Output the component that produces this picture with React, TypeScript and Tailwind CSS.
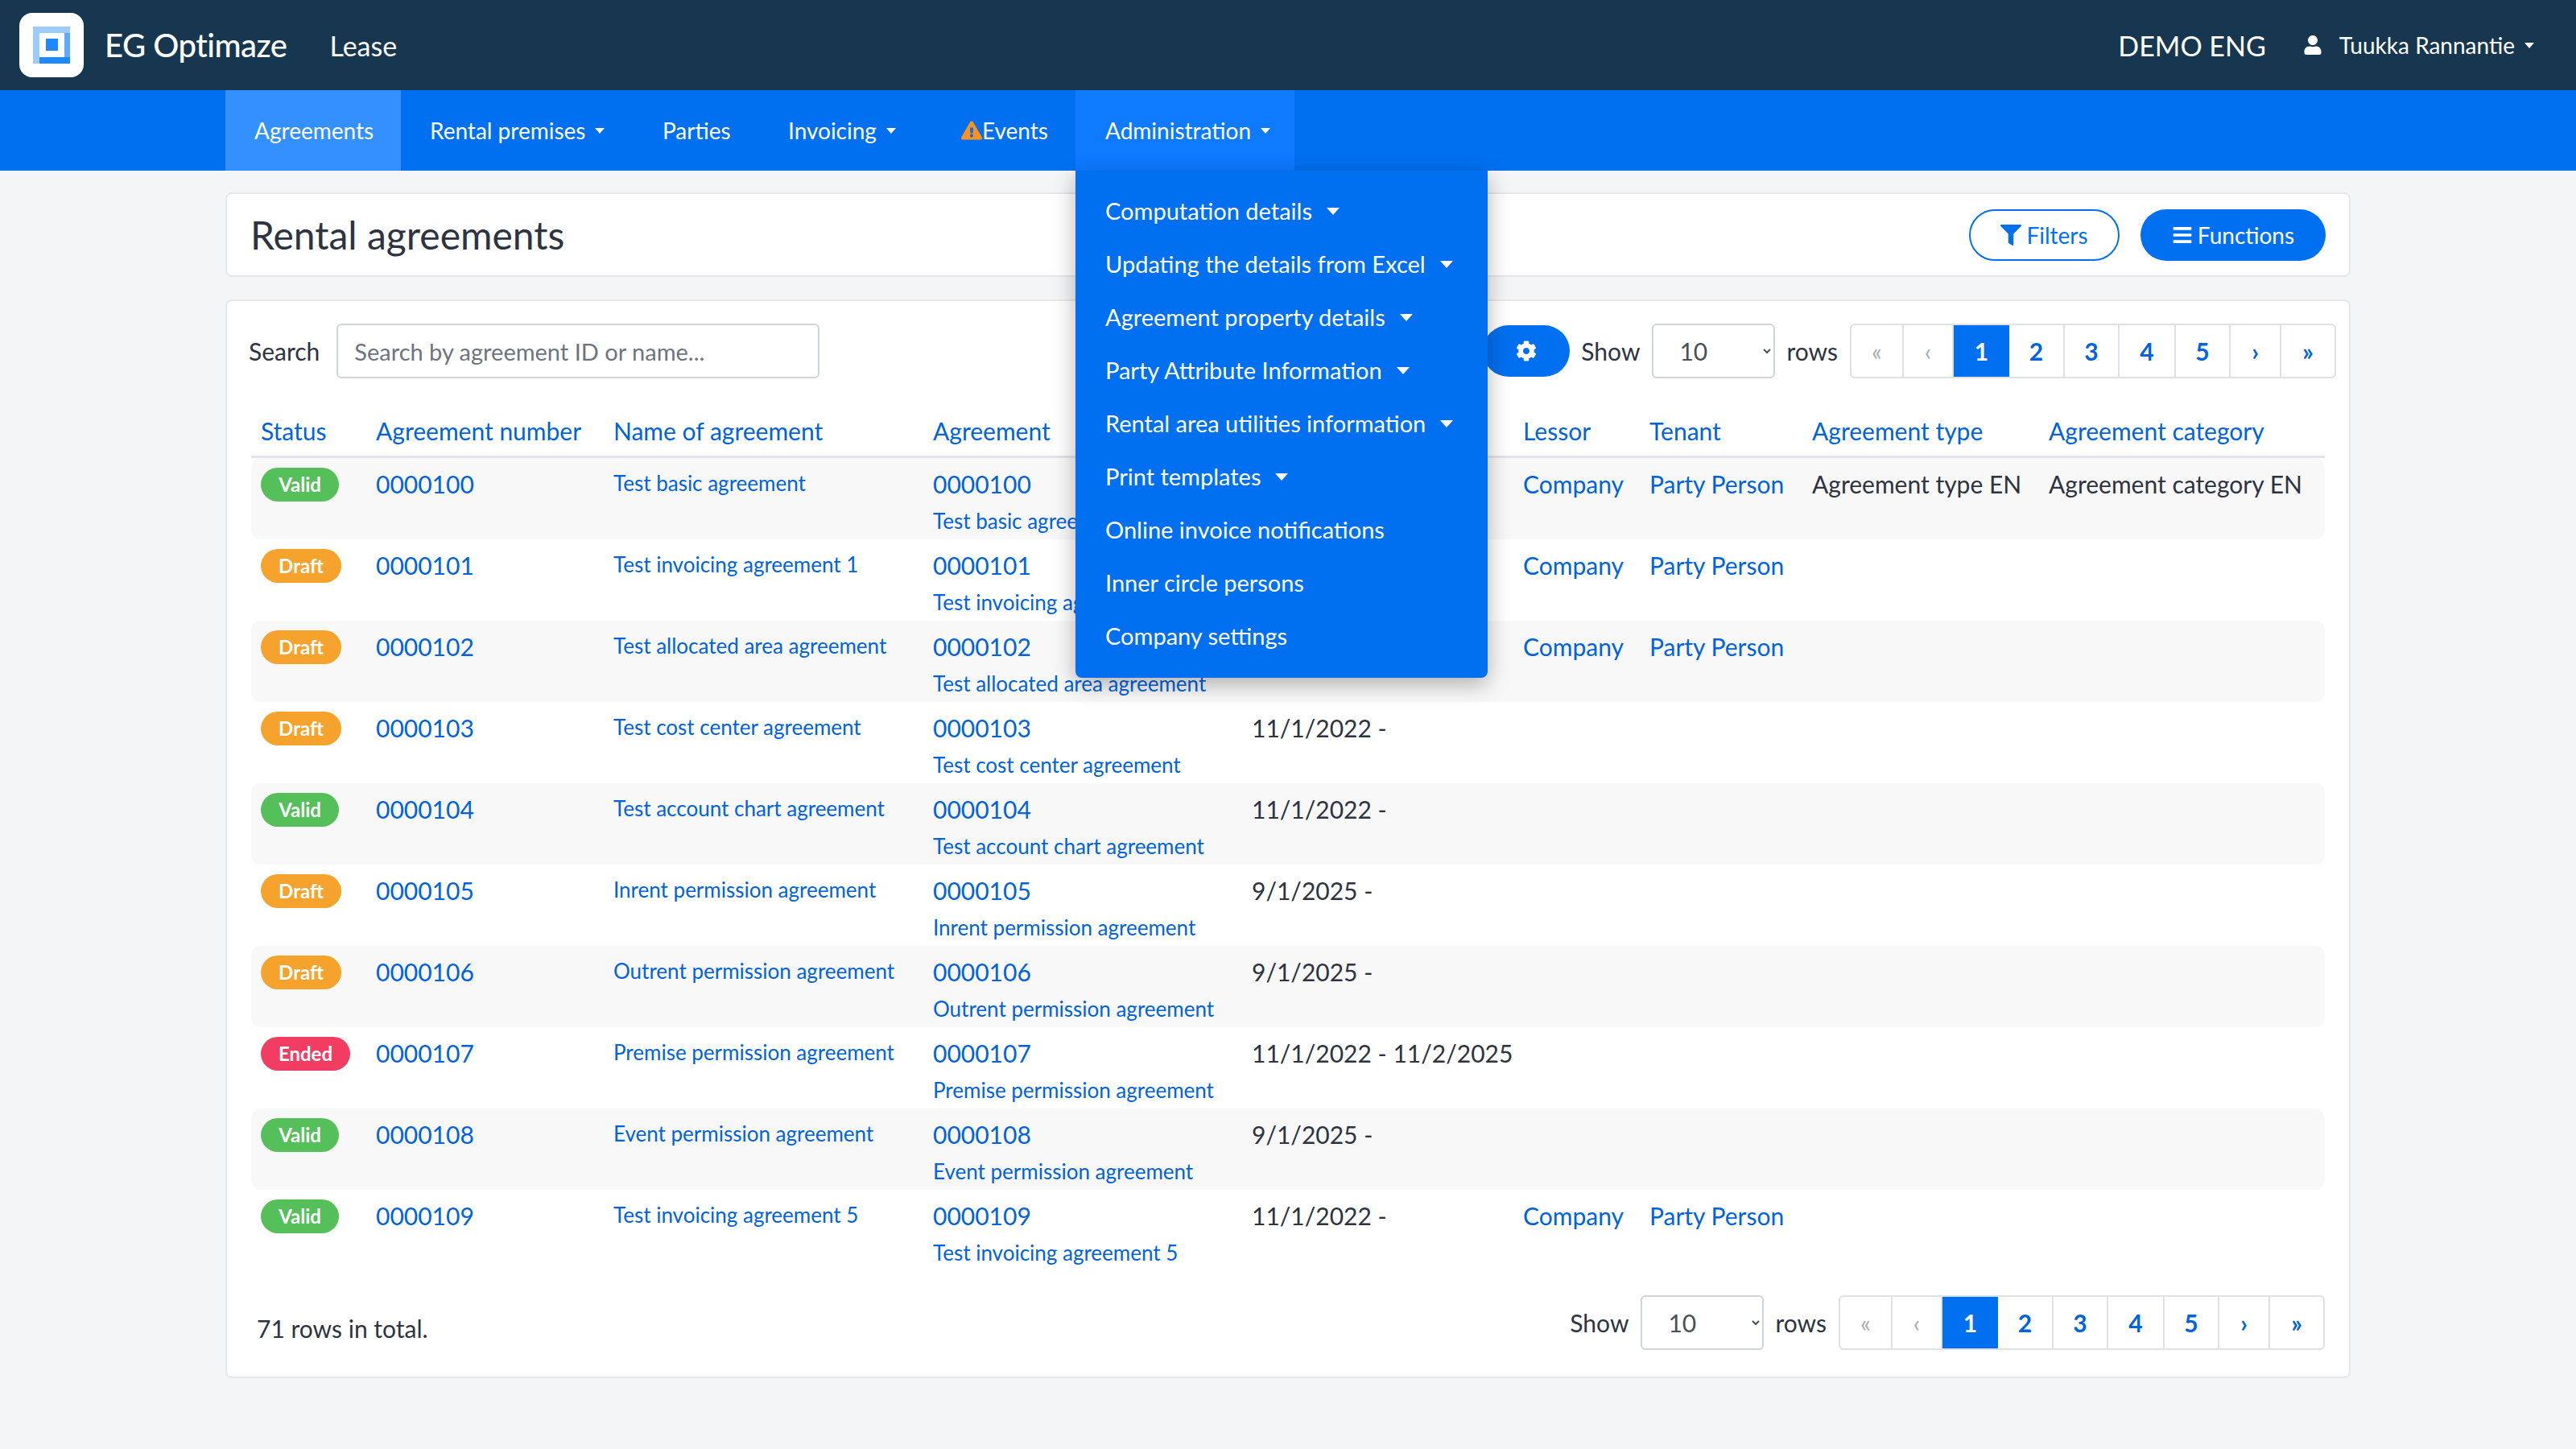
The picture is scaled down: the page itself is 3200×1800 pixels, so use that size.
import { FaBars, FaCog, FaExclamationTriangle, FaFilter, FaUser } from "react-icons/fa";

const statusStyles: Record<string, string> = {
  Valid: "bg-[#55bf5a] w-[97px]",
  Draft: "bg-[#f5a32c] w-[100px]",
  Ended: "bg-[#f23d63] w-[111px]",
};

const rows = [
  { status: "Valid", id: "0000100", name: "Test basic agreement", date: "11/1/2022 -", party: true, type: "Agreement type EN", category: "Agreement category EN" },
  { status: "Draft", id: "0000101", name: "Test invoicing agreement 1", date: "11/1/2022 -", party: true },
  { status: "Draft", id: "0000102", name: "Test allocated area agreement", date: "11/1/2022 -", party: true },
  { status: "Draft", id: "0000103", name: "Test cost center agreement", date: "11/1/2022 -" },
  { status: "Valid", id: "0000104", name: "Test account chart agreement", date: "11/1/2022 -" },
  { status: "Draft", id: "0000105", name: "Inrent permission agreement", date: "9/1/2025 -" },
  { status: "Draft", id: "0000106", name: "Outrent permission agreement", date: "9/1/2025 -" },
  { status: "Ended", id: "0000107", name: "Premise permission agreement", date: "11/1/2022 - 11/2/2025" },
  { status: "Valid", id: "0000108", name: "Event permission agreement", date: "9/1/2025 -" },
  { status: "Valid", id: "0000109", name: "Test invoicing agreement 5", date: "11/1/2022 -", party: true },
];

const menuItems = [
  { label: "Computation details", caret: true },
  { label: "Updating the details from Excel", caret: true },
  { label: "Agreement property details", caret: true },
  { label: "Party Attribute Information", caret: true },
  { label: "Rental area utilities information", caret: true },
  { label: "Print templates", caret: true },
  { label: "Online invoice notifications" },
  { label: "Inner circle persons" },
  { label: "Company settings" },
];

const Caret = ({ big }: { big?: boolean }) =>
  big ? (
    <span className="ml-[18px] inline-block h-0 w-0 border-x-[8px] border-t-[9px] border-x-transparent border-t-white" />
  ) : (
    <span className="ml-[12px] inline-block h-0 w-0 border-x-[6px] border-t-[7px] border-x-transparent border-t-white" />
  );

const Pager = () => {
  const cells = [
    { t: "«", w: "w-[65px]", muted: true },
    { t: "‹", w: "w-[62px]", muted: true },
    { t: "1", w: "w-[69px]", active: true },
    { t: "2", w: "w-[69px]" },
    { t: "3", w: "w-[68px]" },
    { t: "4", w: "w-[70px]" },
    { t: "5", w: "w-[68px]" },
    { t: "›", w: "w-[63px]" },
    { t: "»", w: "w-[66px]" },
  ];
  return (
    <div className="flex h-[68px] overflow-hidden rounded-[6px] border-2 border-[#dee2e6] bg-white">
      {cells.map((c) => (
        <span
          key={c.t}
          className={
            c.active
              ? `${c.w} -my-[2px] flex items-center justify-center border-y-2 border-[#0099e5] bg-[#0070f0] text-[30px] font-bold text-white`
              : `${c.w} flex items-center justify-center border-r-2 border-[#dee2e6] text-[30px] last:border-r-0 ${
                  c.muted ? "text-[#a8adb3]" : "font-bold text-[#0063dc]"
                }`
          }
        >
          {c.t}
        </span>
      ))}
    </div>
  );
};

const RowsSelect = ({ width }: { width: string }) => (
  <select
    defaultValue="10"
    className={`${width} h-[68px] rounded-[6px] border-2 border-[#ced4da] bg-white pl-[28px] pr-[6px] text-[30px] text-[#495057]`}
  >
    <option>10</option>
    <option>25</option>
    <option>50</option>
  </select>
);

export default function App() {
  return (
    <div className="relative min-h-[1800px] bg-[#f4f5f7] font-[Lato,sans-serif] text-[30px] text-[#2d3340]">
      <header className="flex h-[112px] items-center bg-[#16374f] pl-[24px] pr-[52px] text-white">
        <div className="flex h-[80px] w-[80px] items-center justify-center rounded-[16px] bg-white">
          <svg width="46" height="46" viewBox="0 0 46 46">
            <rect x="0" y="0" width="46" height="8" fill="#9ccbff" />
            <rect x="0" y="8" width="8" height="38" fill="#9ccbff" />
            <rect x="39" y="8" width="7" height="30" fill="#5fa8ff" />
            <rect x="8" y="38" width="38" height="8" fill="#1e88ff" />
            <rect x="16" y="15" width="15" height="15" fill="#1e88ff" />
          </svg>
        </div>
        <span className="ml-[26px] text-[40px] font-medium tracking-[-0.5px]">EG Optimaze</span>
        <span className="ml-[53px] text-[34px]">Lease</span>
        <span className="ml-auto text-[34px]">DEMO ENG</span>
        <FaUser className="ml-[46px] text-[24px]" />
        <span className="ml-[21px] text-[28px]">Tuukka Rannantie</span>
        <Caret />
      </header>

      <nav className="flex h-[100px] items-stretch bg-[#0070f0] pl-[280px] text-[28px] text-white">
        <a className="flex w-[218px] items-center bg-[#3490ff] pl-[36px]">Agreements</a>
        <a className="flex w-[289px] items-center pl-[36px]">Rental premises<Caret /></a>
        <a className="flex w-[156px] items-center pl-[36px]">Parties</a>
        <a className="flex w-[215px] items-center pl-[36px]">Invoicing<Caret /></a>
        <a className="flex w-[178px] items-center pl-[36px]">
          <FaExclamationTriangle className="text-[26px] text-[#f7931e]" />
          Events
        </a>
        <a className="flex w-[272px] items-center bg-[#0d7aff] pl-[37px]">Administration<Caret /></a>
      </nav>

      <div className="absolute left-[1336px] top-[212px] z-10 w-[512px] rounded-b-[8px] bg-[#0070f0] pb-[19px] pt-[17px] text-[29px] text-white shadow-[0_8px_28px_rgba(0,0,0,0.3)]">
        {menuItems.map((m) => (
          <div key={m.label} className="flex h-[66px] items-center pl-[37px]">
            {m.label}
            {m.caret && <Caret big />}
          </div>
        ))}
      </div>

      <main className="mx-[280px] pt-[27px]">
        <section className="flex h-[105px] items-center justify-between rounded-[8px] border-2 border-[#e6e7ea] bg-white pl-[29px] pr-[29px]">
          <h1 className="text-[48px] font-normal">Rental agreements</h1>
          <div className="flex gap-[26px] text-[28px]">
            <button className="flex h-[64px] w-[187px] items-center justify-center gap-[6px] rounded-full border-2 border-[#0070f0] text-[#0070f0]">
              <FaFilter className="text-[26px]" />
              Filters
            </button>
            <button className="flex h-[64px] w-[230px] items-center justify-center gap-[6px] rounded-full bg-[#0070f0] text-white">
              <FaBars className="text-[26px]" />
              Functions
            </button>
          </div>
        </section>

        <section className="mt-[28px] h-[1340px] rounded-[8px] border-2 border-[#e6e7ea] bg-white px-[30px] pt-[28px]">
          <div className="-mr-[14px] flex h-[68px] items-center">
            <label className="-ml-[3px]">Search</label>
            <input
              placeholder="Search by agreement ID or name..."
              className="ml-[21px] h-[68px] w-[600px] rounded-[6px] border-2 border-[#ced4da] px-[20px] text-[29px] placeholder:text-[#6c757d]"
            />
            <button className="ml-auto flex h-[64px] w-[108px] items-center justify-center rounded-full bg-[#0070f0] text-[26px] text-white">
              <FaCog />
            </button>
            <span className="ml-[14px]">Show</span>
            <div className="ml-[15px]"><RowsSelect width="w-[153px]" /></div>
            <span className="ml-[14px] mr-[15px]">rows</span>
            <Pager />
          </div>

          <table className="mt-[35px] w-full table-fixed border-separate border-spacing-0">
            <thead>
              <tr className="h-[64px] text-left text-[#0063dc]">
                <th className="w-[143px] border-b-[3px] border-[#e3e4e7] pl-[12px] font-normal">Status</th>
                <th className="w-[295px] border-b-[3px] border-[#e3e4e7] pl-[12px] font-normal">Agreement number</th>
                <th className="w-[397px] border-b-[3px] border-[#e3e4e7] pl-[12px] font-normal">Name of agreement</th>
                <th className="w-[396px] border-b-[3px] border-[#e3e4e7] pl-[12px] font-normal">Agreement</th>
                <th className="w-[337px] border-b-[3px] border-[#e3e4e7] pl-[12px] font-normal">Date</th>
                <th className="w-[157px] border-b-[3px] border-[#e3e4e7] pl-[12px] font-normal">Lessor</th>
                <th className="w-[202px] border-b-[3px] border-[#e3e4e7] pl-[12px] font-normal">Tenant</th>
                <th className="w-[294px] border-b-[3px] border-[#e3e4e7] pl-[12px] font-normal">Agreement type</th>
                <th className="border-b-[3px] border-[#e3e4e7] pl-[12px] font-normal">Agreement category</th>
              </tr>
            </thead>
            <tbody>
              {rows.map((r, i) => (
                <tr key={r.id} className={i % 2 === 0 ? "h-[101px] bg-[#f8f8f9]" : "h-[101px] bg-white"}>
                  <td className="rounded-l-[12px] pl-[12px] pt-[12px] align-top">
                    <span className={`${statusStyles[r.status]} flex h-[42px] items-center justify-center rounded-full text-[24px] font-bold text-white`}>
                      {r.status}
                    </span>
                  </td>
                  <td className="pl-[12px] pt-[10px] align-top text-[#0063dc]">{r.id}</td>
                  <td className="pl-[12px] pt-[12px] align-top text-[26px] text-[#0063dc]">{r.name}</td>
                  <td className="whitespace-nowrap pl-[12px] pt-[10px] align-top text-[#0063dc]">
                    <div>{r.id}</div>
                    <div className="mt-[4px] text-[26px]">{r.name}</div>
                  </td>
                  <td className="whitespace-nowrap pl-[12px] pt-[10px] align-top">{r.date}</td>
                  <td className="pl-[12px] pt-[10px] align-top text-[#0063dc]">{r.party && "Company"}</td>
                  <td className="whitespace-nowrap pl-[12px] pt-[10px] align-top text-[#0063dc]">{r.party && "Party Person"}</td>
                  <td className="whitespace-nowrap pl-[12px] pt-[10px] align-top">{r.type}</td>
                  <td className="whitespace-nowrap rounded-r-[12px] pl-[12px] pt-[10px] align-top">{r.category}</td>
                </tr>
              ))}
            </tbody>
          </table>

          <div className="mt-[29px] flex h-[70px] items-center">
            <span className="ml-[7px] mt-[14px]">71 rows in total.</span>
            <span className="ml-auto">Show</span>
            <div className="ml-[15px]"><RowsSelect width="w-[153px]" /></div>
            <span className="ml-[14px] mr-[15px]">rows</span>
            <Pager />
          </div>
        </section>
      </main>
    </div>
  );
}
